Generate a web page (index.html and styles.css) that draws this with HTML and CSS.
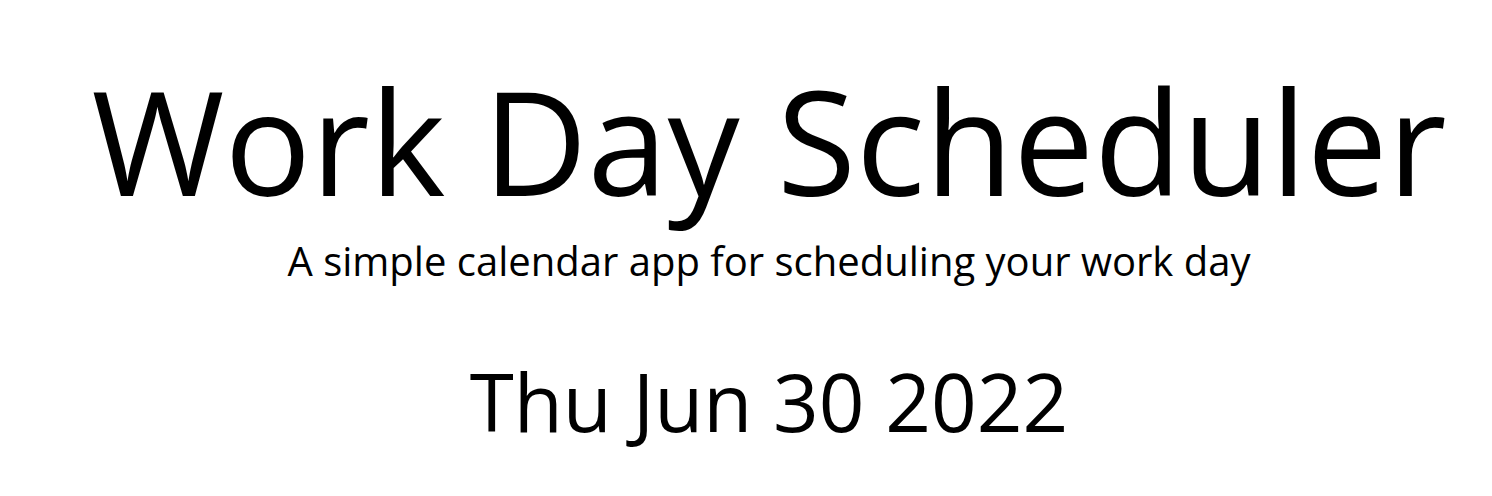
FILE: index.html
```html
<!DOCTYPE html>
<html lang="en">
<head>
<meta charset="utf-8">
<title>Work Day Scheduler</title>
<link rel="stylesheet" href="styles.css">
</head>
<body>
<header class="jumbotron">
<h1 class="title">Work Day Scheduler</h1>
<p class="lead">A simple calendar app for scheduling your work day</p>
<p class="current-day">Thu Jun 30 2022</p>
</header>
</body>
</html>
```

FILE: styles.css
```css
body {
  margin: 0;
  background: #fff;
  color: #000;
  font-family: "Open Sans", "Noto Sans", sans-serif;
}

.jumbotron {
  padding: 54px 0 32px 46px;
  text-align: center;
}

.title {
  margin: 0 0 11px;
  font-size: 144px;
  font-weight: 400;
  line-height: 172px;
  white-space: nowrap;
}

.lead {
  margin: 0 0 68px;
  font-size: 40px;
  line-height: 48px;
}

.current-day {
  margin: 0;
  font-size: 80px;
  line-height: 96px;
}
```
